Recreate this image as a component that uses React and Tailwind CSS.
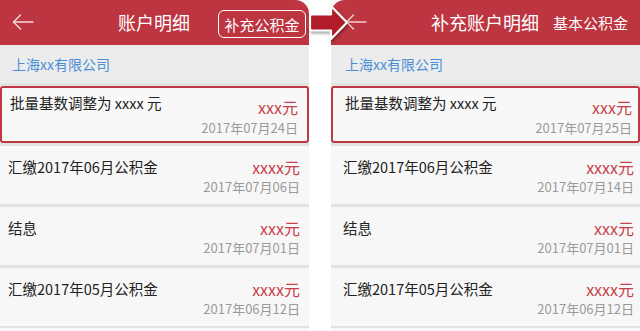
const FONT = { fontFamily: '"Microsoft YaHei", "Noto Sans CJK SC", "Noto Sans", sans-serif' };

const leftItems = [
  { title: "批量基数调整为 xxxx 元", amount: "xxx元", date: "2017年07月24日", active: true },
  { title: "汇缴2017年06月公积金", amount: "xxxx元", date: "2017年07月06日" },
  { title: "结息", amount: "xxx元", date: "2017年07月01日" },
  { title: "汇缴2017年05月公积金", amount: "xxxx元", date: "2017年06月12日" },
];

const rightItems = [
  { title: "批量基数调整为 xxxx 元", amount: "xxx元", date: "2017年07月25日", active: true },
  { title: "汇缴2017年06月公积金", amount: "xxxx元", date: "2017年07月14日" },
  { title: "结息", amount: "xxx元", date: "2017年07月01日" },
  { title: "汇缴2017年05月公积金", amount: "xxxx元", date: "2017年06月12日" },
];

function BackArrow({ className }) {
  return (
    <svg width="22" height="16" viewBox="0 0 22 16" className={className} fill="none" stroke="currentColor" strokeWidth="1.4" strokeLinecap="round" strokeLinejoin="round">
      <path d="M21 8H1.5" />
      <path d="M8.5 1L1.5 8l7 7" />
    </svg>
  );
}

function Record({ item, padLeft, padRight }) {
  if (item.active) {
    return (
      <div className={`h-[57px] rounded-[3px] border-2 border-[#bf3741] bg-[#f8f8f8] pt-[5px] ${padLeft} ${padRight}`}>
        <div className="flex items-start justify-between">
          <span className="text-[14.5px] leading-[20px] text-[#222]">{item.title}</span>
          <span className="mt-[4px] text-[16px] leading-[20px] text-[#c7404a]">{item.amount}</span>
        </div>
        <div className="mt-[2px] text-right text-[13px] leading-[18px] text-[#9a9a9a]">{item.date}</div>
      </div>
    );
  }
  return (
    <div className={`h-[61px] border-t-[3px] border-[#e2e2e2] bg-[#f7f7f7] pt-[11px] ${padLeft} ${padRight}`}>
      <div className="flex items-center justify-between">
        <span className="text-[14.5px] leading-[20px] text-[#222]">{item.title}</span>
        <span className="text-[16px] leading-[20px] text-[#c7404a]">{item.amount}</span>
      </div>
      <div className="mt-[1px] text-right text-[13px] leading-[18px] text-[#9a9a9a]">{item.date}</div>
    </div>
  );
}

function Panel({ side, title, items }) {
  const left = side === "left";
  const padLeft = left ? "pl-[8px]" : "pl-[12px]";
  const padRight = left ? "pr-[9px]" : "pr-[6px]";
  return (
    <div className="flex w-[309px] flex-col bg-[#f7f7f7]">
      <div
        className={`relative flex h-[45px] items-center bg-[#bd3540] text-white ${left ? "rounded-tr-[14px]" : "rounded-tl-[14px]"}`}
      >
        <BackArrow className={`absolute top-[14px] ${left ? "left-[12px] text-[#f5dcde]" : "left-[14px] text-[#f3d2d5]"}`} />
        {left ? (
          <>
            <span className="absolute left-[118px] top-[9px] text-[18px] leading-[26px]">{title}</span>
            <span className="absolute left-[218px] top-[10px] flex h-[28px] w-[88px] items-center justify-center rounded-[6px] border-[1.5px] border-white text-[15px] leading-none">
              补充公积金
            </span>
          </>
        ) : (
          <>
            <span className="absolute left-[100px] top-[9px] text-[18px] leading-[26px]">{title}</span>
            <span className="absolute left-[222px] top-[11px] text-[15px] leading-[24px]">基本公积金</span>
          </>
        )}
      </div>
      <div className={`flex h-[38px] items-center bg-[#ececec] ${left ? "pl-[12px]" : "pl-[14px]"}`}>
        <span className="text-[14px] text-[#4a8fd8]">上海xx有限公司</span>
      </div>
      <div className="h-[3px] bg-[#e2e2e2]" />
      {items.map((item, i) => (
        <Record key={i} item={item} padLeft={padLeft} padRight={padRight} />
      ))}
      <div className="h-[2px] bg-[#e2e2e2]" />
    </div>
  );
}

export default function App() {
  return (
    <div className="relative flex h-[331px] w-[640px] overflow-hidden bg-white" style={FONT}>
      <Panel side="left" title="账户明细" items={leftItems} />
      <div className="w-[22px]" />
      <Panel side="right" title="补充账户明细" items={rightItems} />
      <svg
        width="44"
        height="42"
        viewBox="0 0 44 42"
        className="absolute left-[307px] top-[2px]"
        style={{ filter: "drop-shadow(1px 2px 1.5px rgba(0,0,0,0.35))" }}
      >
        <path
          d="M5 12.5 H24 V4 L40 20.5 L24 37 V28.5 H5 Q3 28.5 3 26.5 V14.5 Q3 12.5 5 12.5 Z"
          fill="#b11c29"
          stroke="#ffffff"
          strokeWidth="2.2"
          strokeLinejoin="round"
        />
      </svg>
    </div>
  );
}
